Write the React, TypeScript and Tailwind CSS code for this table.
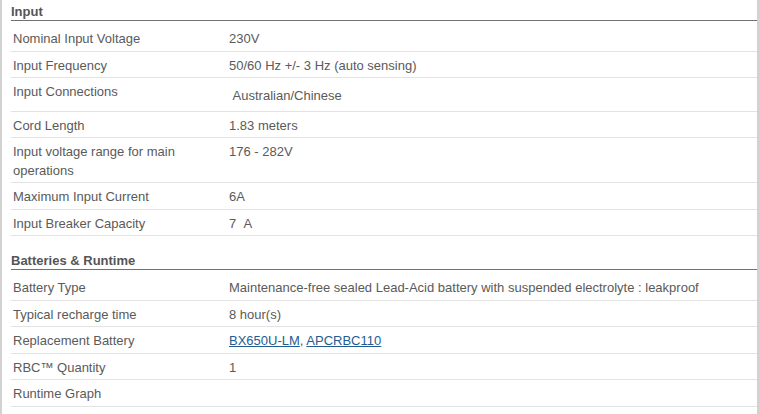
import React from "react";

type Row = {
  label: string;
  value: React.ReactNode;
  shifted?: boolean;
};

const inputRows: Row[] = [
  { label: "Nominal Input Voltage", value: "230V" },
  { label: "Input Frequency", value: "50/60 Hz +/- 3 Hz (auto sensing)" },
  { label: "Input Connections", value: "\u00a0Australian/Chinese", shifted: true },
  { label: "Cord Length", value: "1.83 meters" },
  { label: "Input voltage range for main operations", value: "176 - 282V" },
  { label: "Maximum Input Current", value: "6A" },
  { label: "Input Breaker Capacity", value: "7\u00a0\u00a0A" },
];

const batteryRows: Row[] = [
  {
    label: "Battery Type",
    value: "Maintenance-free sealed Lead-Acid battery with suspended electrolyte : leakproof",
  },
  { label: "Typical recharge time", value: "8 hour(s)" },
  {
    label: "Replacement Battery",
    value: (
      <>
        <a href="#" className="text-[#245c92] underline">BX650U-LM</a>
        {", "}
        <a href="#" className="text-[#245c92] underline">APCRBC110</a>
      </>
    ),
  },
  { label: "RBC\u2122 Quantity", value: "1" },
  { label: "Runtime Graph", value: "" },
];

const SpecSection = ({ title, rows, className }: { title: string; rows: Row[]; className?: string }) => {
  return (
    <div className={className}>
      <h3 className="pt-[4px] leading-4 text-[13px] font-bold text-[#555] border-b border-[#707070]">
        {title}
      </h3>
      <div className="mt-1">
        {rows.map((row) => (
          <div
            key={row.label}
            className="grid grid-cols-[216px_1fr] items-start border-b border-[#e3e3e3] leading-[18.5px]"
          >
            <div className="px-[2px] pt-[5px] pb-[2px] pr-6">{row.label}</div>
            <div className={row.shifted ? "px-[2px] pt-[9px] pb-[5px]" : "px-[2px] pt-[5px] pb-[2px]"}>
              {row.value}
            </div>
          </div>
        ))}
      </div>
    </div>
  );
};

export default function App() {
  return (
    <div
      className="w-[759px] h-[414px] overflow-hidden bg-white text-[13px] text-[#5a5a5a]"
      style={{ fontFamily: '"Liberation Sans", Arial, sans-serif' }}
    >
      <div className="h-full border-l-2 border-r-2 border-[#d2d2d2] pl-[9px]">
        <SpecSection title="Input" rows={inputRows} />
        <SpecSection title="Batteries & Runtime" rows={batteryRows} className="mt-[13px]" />
      </div>
    </div>
  );
}
